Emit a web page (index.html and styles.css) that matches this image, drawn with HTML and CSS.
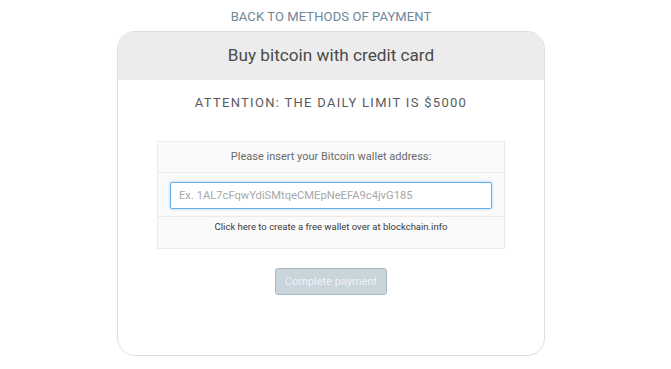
FILE: index.html
```html
<!DOCTYPE html>
<html>
<head>
<meta charset="utf-8">
<link rel="stylesheet" href="styles.css">
</head>
<body>
<div class="wrap">
  <a class="back" href="#">BACK TO METHODS OF PAYMENT</a>
  <div class="card">
    <div class="card-head">Buy bitcoin with credit card</div>
    <div class="card-body">
      <div class="attention">ATTENTION: THE DAILY LIMIT IS $5000</div>
      <div class="panel">
        <div class="panel-head">Please insert your Bitcoin wallet address:</div>
        <div class="panel-body">
          <input class="addr" type="text" placeholder="Ex. 1AL7cFqwYdiSMtqeCMEpNeEFA9c4jvG185">
        </div>
        <div class="panel-foot"><a href="#">Click here to create a free wallet over at blockchain.info</a></div>
      </div>
      <div class="actions"><button class="pay" disabled>Complete payment</button></div>
    </div>
  </div>
</div>
</body>
</html>
```
FILE: styles.css
```css
html, body { margin: 0; padding: 0; background: #fff; }
body { font-family: Roboto, "Liberation Sans", sans-serif; }
.wrap {
  width: 662px;
  display: flex;
  flex-direction: column;
  align-items: center;
}
.back {
  margin-top: 9px;
  font-size: 13px;
  line-height: 16px;
  color: #6d8798;
  text-decoration: none;
  letter-spacing: 0.1px;
}
.card {
  margin-top: 6px;
  width: 426px;
  border: 1px solid #dedede;
  border-radius: 18px;
  overflow: hidden;
  background: #fff;
}
.card-head {
  background: #ececec;
  height: 48px;
  line-height: 47px;
  text-align: center;
  font-size: 17.2px;
  color: #4a4a4a;
}
.card-body {
  display: flex;
  flex-direction: column;
  align-items: center;
  padding-bottom: 60px;
}
.attention {
  margin-top: 15px;
  font-size: 13px;
  line-height: 16px;
  letter-spacing: 1.3px;
  color: #5a5a5a;
}
.panel {
  margin-top: 30px;
  width: 346px;
  border: 1px solid #eaeaea;
  background: #fafafa;
}
.panel-head {
  height: 30px;
  line-height: 30px;
  text-align: center;
  font-size: 11px;
  color: #6a6a6a;
  border-bottom: 1px solid #eaeaea;
}
.panel-body {
  padding: 9px 12px 7px;
  border-bottom: 1px solid #eaeaea;
}
.addr {
  display: block;
  box-sizing: border-box;
  width: 100%;
  height: 27px;
  border: 1px solid #66afe9;
  border-radius: 2px;
  box-shadow: 0 0 3px rgba(102, 175, 233, 0.6);
  padding: 0 8px;
  font-family: Roboto, "Liberation Sans", sans-serif;
  font-size: 11.2px;
  background: #fff;
  outline: none;
}
.addr::placeholder { color: #a8a8a8; }
.panel-foot {
  height: 31px;
  line-height: 20px;
  text-align: center;
  font-size: 9.5px;
}
.panel-foot a { color: #3a3a3a; text-decoration: none; }
.actions { margin-top: 19px; }
.pay {
  width: 112px;
  height: 27px;
  background: #c9d4db;
  border: 1px solid #a9b9c4;
  border-radius: 3px;
  color: #eef2f5;
  font-family: Roboto, "Liberation Sans", sans-serif;
  font-size: 11px;
  padding: 0;
}
```
